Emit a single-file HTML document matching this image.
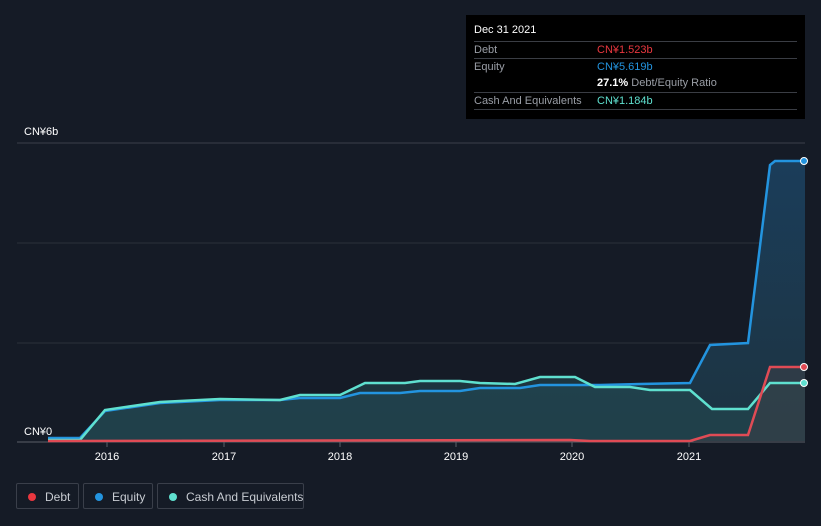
<!DOCTYPE html>
<html><head><meta charset="utf-8"><style>
body{margin:0;width:821px;height:526px;background:#151b26;font-family:"Liberation Sans",sans-serif;overflow:hidden;position:relative}
.tip{position:absolute;left:466px;top:15px;width:339px;height:104px;background:#000;color:#fff;font-size:11px}
.tip .r{position:absolute;left:8px;right:8px;height:17px;border-top:1px solid #3a3d44;line-height:17px;color:#9a9ea6}
.tip .v{position:absolute;left:123px}
.leg{position:absolute;top:483px;height:26px;border:1px solid #3a3f4a;border-radius:2px;color:#c8ccd2;font-size:12px;line-height:26px;box-sizing:border-box;white-space:nowrap}
.leg i{position:absolute;left:11px;top:9px;width:8px;height:8px;border-radius:50%}
</style></head><body>
<svg width="821" height="526" style="position:absolute;left:0;top:0">
<defs><linearGradient id="g" x1="0" y1="0" x2="0" y2="1"><stop offset="0" stop-color="#1b3d5a"/><stop offset="1" stop-color="#1c3340"/></linearGradient></defs>
<line x1="17" y1="143" x2="805" y2="143" stroke="#3a3f4a"/>
<line x1="17" y1="243" x2="805" y2="243" stroke="#2a303a"/>
<line x1="17" y1="343" x2="805" y2="343" stroke="#2a303a"/>
<path d="M48,438 L80,438 L105,411 L160,403 L220,400 L280,400 L300,398 L340,398 L360,393 L400,393 L420,391 L460,391 L480,388 L520,388 L540,385 L600,385 L640,384 L690,383 L710,345 L748,343 L770,165 L775,161 L805,161 L805,441 L48,441Z" fill="url(#g)"/>
<path d="M48,440 L80,440 L105,410 L160,402 L220,399 L280,400 L300,395 L340,395 L365,383 L405,383 L420,381 L460,381 L480,383 L515,384 L540,377 L575,377 L595,387 L630,387 L650,390 L690,390 L712,409 L748,409 L770,383 L805,383 L805,441 L48,441Z" fill="#244a52" opacity="0.55"/>
<path d="M48,441 L570,440 L590,441 L690,441 L710,435 L748,435 L770,367 L805,367 L805,441 L48,441Z" fill="#3a3f48" opacity="0.6"/>
<line x1="17" y1="442" x2="805" y2="442" stroke="#5a5f68"/>
<path d="M48,438 L80,438 L105,411 L160,403 L220,400 L280,400 L300,398 L340,398 L360,393 L400,393 L420,391 L460,391 L480,388 L520,388 L540,385 L600,385 L640,384 L690,383 L710,345 L748,343 L770,165 L775,161 L805,161" fill="none" stroke="#2394df" stroke-width="2.5"/>
<path d="M48,440 L80,440 L105,410 L160,402 L220,399 L280,400 L300,395 L340,395 L365,383 L405,383 L420,381 L460,381 L480,383 L515,384 L540,377 L575,377 L595,387 L630,387 L650,390 L690,390 L712,409 L748,409 L770,383 L805,383" fill="none" stroke="#5fe0cf" stroke-width="2.5"/>
<path d="M48,441 L570,440 L590,441 L690,441 L710,435 L748,435 L770,367 L805,367" fill="none" stroke="#e04b55" stroke-width="2.5"/>
<circle cx="804" cy="161" r="3.5" fill="#2394df" stroke="#fff"/>
<circle cx="804" cy="367" r="3.5" fill="#e04b55" stroke="#fff"/>
<circle cx="804" cy="383" r="3.5" fill="#5fe0cf" stroke="#fff"/>
<g stroke="#5a5f68"><line x1="107" y1="442" x2="107" y2="447"/><line x1="224" y1="442" x2="224" y2="447"/><line x1="340" y1="442" x2="340" y2="447"/><line x1="456" y1="442" x2="456" y2="447"/><line x1="572" y1="442" x2="572" y2="447"/><line x1="689" y1="442" x2="689" y2="447"/></g>
<g fill="#fff" font-size="11" text-anchor="middle" font-family="Liberation Sans"><text x="107" y="460">2016</text><text x="224" y="460">2017</text><text x="340" y="460">2018</text><text x="456" y="460">2019</text><text x="572" y="460">2020</text><text x="689" y="460">2021</text></g>
<text x="24" y="135" fill="#fff" font-size="11" font-family="Liberation Sans">CN¥6b</text>
<text x="24" y="435" fill="#fff" font-size="11" font-family="Liberation Sans">CN¥0</text>
</svg>
<div class="tip">
<div style="position:absolute;left:8px;top:9px;font-size:11px">Dec 31 2021</div>
<div class="r" style="top:26px">Debt<span class="v" style="color:#e9373f">CN¥1.523b</span></div>
<div class="r" style="top:43px">Equity<span class="v" style="color:#2394df">CN¥5.619b</span></div>
<div class="r" style="top:60px;border-top:none"><span class="v"><b style="color:#fff">27.1%</b> Debt/Equity Ratio</span></div>
<div class="r" style="top:77px">Cash And Equivalents<span class="v" style="color:#5fe0cf">CN¥1.184b</span></div>
<div class="r" style="top:94px;height:0"></div>
</div>
<div class="leg" style="left:16px;width:63px"><i style="background:#e9373f"></i><span style="margin-left:28px">Debt</span></div>
<div class="leg" style="left:83px;width:70px"><i style="background:#2394df"></i><span style="margin-left:28px">Equity</span></div>
<div class="leg" style="left:157px;width:147px"><i style="background:#5fe0cf"></i><span style="margin-left:28px">Cash And Equivalents</span></div>
</body></html>
